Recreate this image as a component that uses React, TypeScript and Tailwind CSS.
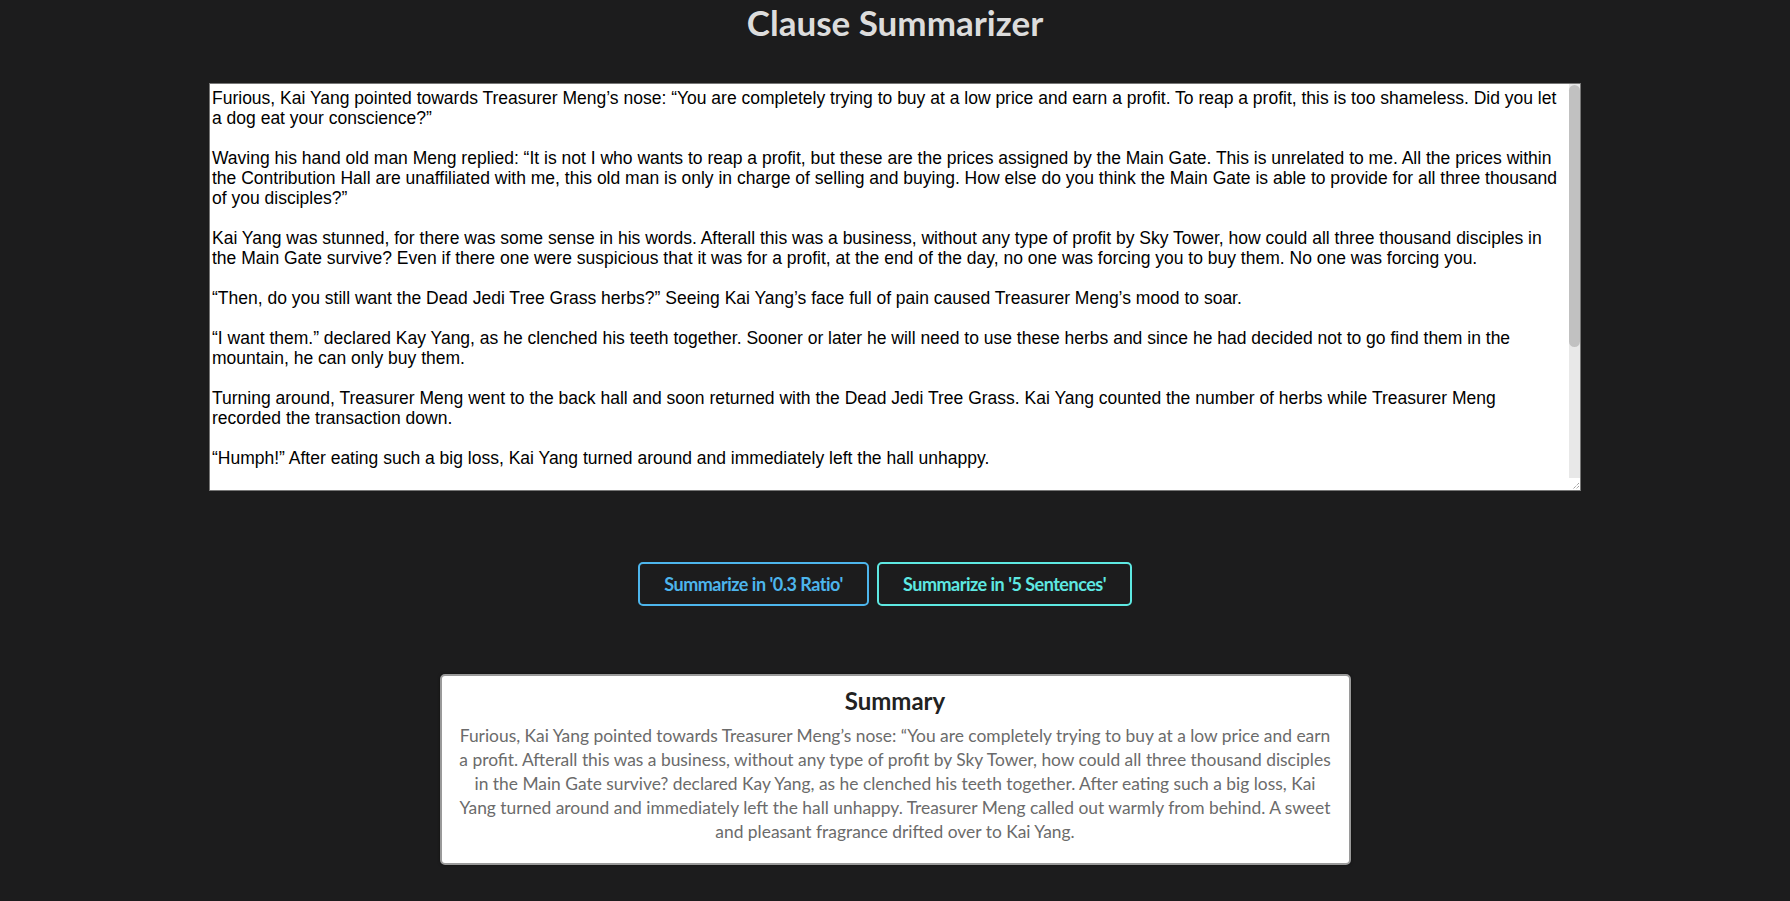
import React from "react";

const TEXT = `Furious, Kai Yang pointed towards Treasurer Meng’s nose: “You are completely trying to buy at a low price and earn a profit. To reap a profit, this is too shameless. Did you let a dog eat your conscience?”

Waving his hand old man Meng replied: “It is not I who wants to reap a profit, but these are the prices assigned by the Main Gate. This is unrelated to me. All the prices within the Contribution Hall are unaffiliated with me, this old man is only in charge of selling and buying. How else do you think the Main Gate is able to provide for all three thousand of you disciples?”

Kai Yang was stunned, for there was some sense in his words. Afterall this was a business, without any type of profit by Sky Tower, how could all three thousand disciples in the Main Gate survive? Even if there one were suspicious that it was for a profit, at the end of the day, no one was forcing you to buy them. No one was forcing you.

“Then, do you still want the Dead Jedi Tree Grass herbs?” Seeing Kai Yang’s face full of pain caused Treasurer Meng’s mood to soar.

“I want them.” declared Kay Yang, as he clenched his teeth together. Sooner or later he will need to use these herbs and since he had decided not to go find them in the mountain, he can only buy them.

Turning around, Treasurer Meng went to the back hall and soon returned with the Dead Jedi Tree Grass. Kai Yang counted the number of herbs while Treasurer Meng recorded the transaction down.

“Humph!” After eating such a big loss, Kai Yang turned around and immediately left the hall unhappy.


“Young brother Kai, if you need anything in the future, come and look for this old man again!” Treasurer Meng called out warmly from behind.

Kai Yang did not even turn his head back, he just walked out of the Contribution Hall with big strides. A sweet and pleasant fragrance drifted over to Kai Yang.`;

const SUMMARY =
  "Furious, Kai Yang pointed towards Treasurer Meng’s nose: “You are completely trying to buy at a low price and earn a profit. Afterall this was a business, without any type of profit by Sky Tower, how could all three thousand disciples in the Main Gate survive? declared Kay Yang, as he clenched his teeth together. After eating such a big loss, Kai Yang turned around and immediately left the hall unhappy. Treasurer Meng called out warmly from behind. A sweet and pleasant fragrance drifted over to Kai Yang.";

export default function App() {
  return (
    <div className="min-h-[901px] w-full bg-[#1c1c1d] font-['Lato',sans-serif]">
      <h1 className="pt-[1px] text-center text-[35px] font-bold leading-[42px] text-[#dcdcdc]">
        Clause Summarizer
      </h1>
      <div className="mt-[40px] flex justify-center">
        <div className="flex h-[408px] w-[1372px] border border-[#767676] bg-white">
          <textarea
            className="block h-full min-w-0 flex-1 resize-none overflow-hidden border-0 bg-white pl-[2px] pr-[4px] pt-[4px] font-['Liberation_Sans',Arial,sans-serif] text-[17.5px] leading-[20px] text-black outline-none"
            defaultValue={TEXT}
          />
          <div className="flex w-[11px] flex-col bg-[#e8e8e8]">
            <div className="mt-[1px] h-[262px] rounded-full bg-[#c1c1c1]" />
            <div className="flex-1" />
            <div className="flex h-[12px] items-end justify-end bg-white">
              <svg width="11" height="11" viewBox="0 0 11 11">
                <path d="M10 4 L4 10 M10 7 L7 10" stroke="#7a7a7a" strokeWidth="1" strokeDasharray="1 1" />
              </svg>
            </div>
          </div>
        </div>
      </div>
      <div className="mt-[71px] flex justify-center gap-[8px] pr-[20px]">
        <button className="h-[44px] w-[231px] rounded-[5px] border-2 border-[#4db5ec] bg-transparent text-[18px] font-bold tracking-[-0.5px] text-[#4db5ec]">
          Summarize in '0.3 Ratio'
        </button>
        <button className="h-[44px] w-[255px] rounded-[5px] border-2 border-[#5ee8e2] bg-transparent text-[18px] font-bold tracking-[-0.5px] text-[#5ee8e2]">
          Summarize in '5 Sentences'
        </button>
      </div>
      <div className="mt-[68px] flex justify-center">
        <div className="w-[911px] rounded-[5px] border-2 border-[#9a9a9a] bg-white px-[16px] pb-[19px] pt-[10px] text-center shadow-[0_0_3px_rgba(0,0,0,0.5)]">
          <h2 className="text-[24px] font-bold leading-[30px] text-[#222]">Summary</h2>
          <p className="mt-[8px] text-[17.4px] leading-[24px] text-[#6b6b6b]">{SUMMARY}</p>
        </div>
      </div>
    </div>
  );
}
